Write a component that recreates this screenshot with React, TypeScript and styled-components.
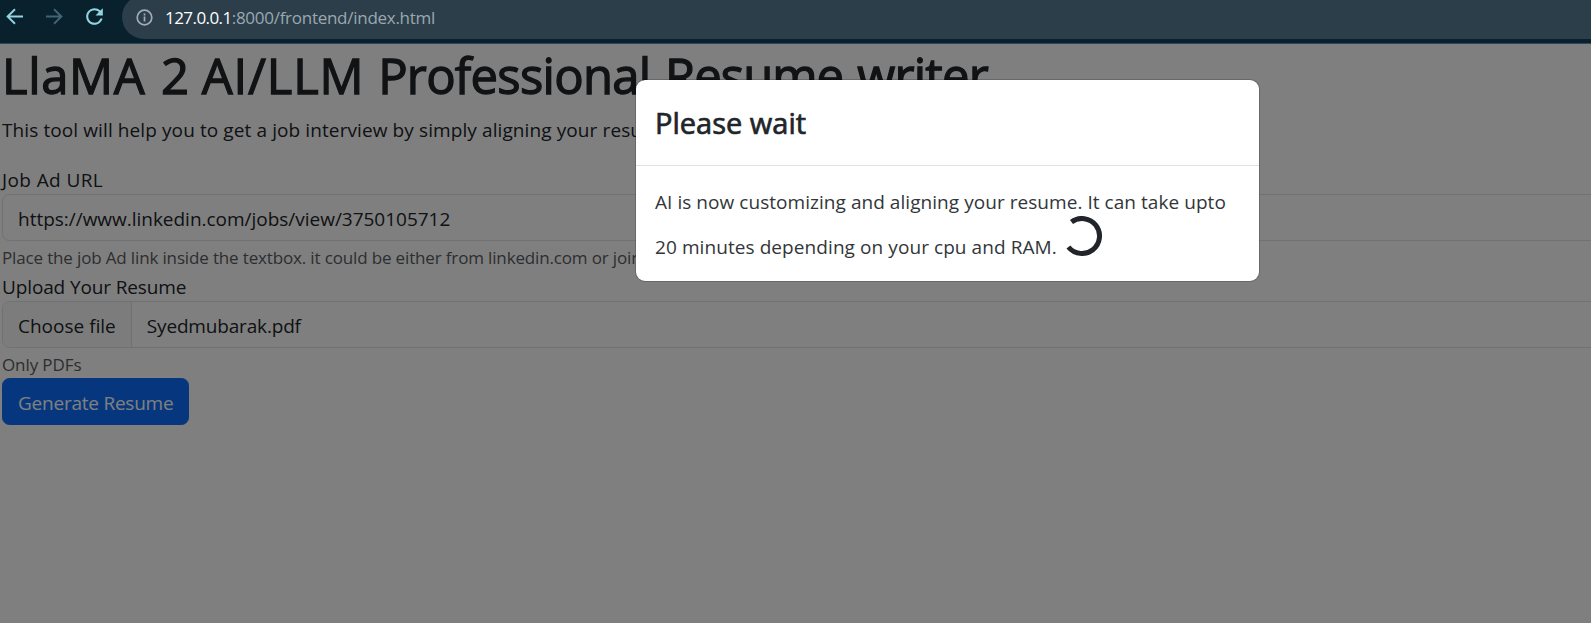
import React from "react";
import styled, { createGlobalStyle } from "styled-components";

const GlobalStyle = createGlobalStyle`
  * { box-sizing: border-box; }
  html, body { margin: 0; overflow: hidden; }
  body {
    font-family: "Open Sans", "Noto Sans", sans-serif;
    color: #212529;
    background: #808080;
  }
`;

const Window = styled.div`
  width: 100%;
  height: 100vh;
  display: flex;
  flex-direction: column;
  overflow: hidden;
`;

const Toolbar = styled.header`
  flex: none;
  height: 44px;
  display: flex;
  align-items: flex-start;
  overflow: hidden;
  background: #08212d;
  border-bottom: 1px solid #29495a;
`;

const NavButtons = styled.nav`
  flex: none;
  width: 122px;
  padding: 4px 0 0 2px;
  display: flex;
  gap: 15px;
`;

const NavIcon = styled.svg<{ $dim?: boolean }>`
  width: 25px;
  height: 25px;
  color: ${(p) => (p.$dim ? "#416576" : "#94d4e2")};
`;

const AddressBar = styled.div`
  flex: 1;
  height: 44px;
  margin-top: -5px;
  padding: 1px 0 0 14px;
  display: flex;
  align-items: center;
  border-radius: 22px 0 0 22px;
  background: #2b3e4a;
  color: #9ba8b0;
`;

const InfoIcon = styled.svg`
  width: 17px;
  height: 17px;
  margin-right: 12px;
  color: #a3acb2;
`;

const UrlPart = styled.span<{ $host?: boolean }>`
  font-size: 17px;
  line-height: 24px;
  white-space: nowrap;
  letter-spacing: ${(p) => (p.$host ? "-0.56px" : "-0.27px")};
  color: ${(p) => (p.$host ? "#ffffff" : "inherit")};
`;

const Viewport = styled.div`
  position: relative;
  flex: 1;
  overflow: hidden;
  background: #ffffff;
`;

const Page = styled.main`
  width: 1893px;
  padding-left: 2px;
`;

const Heading = styled.h1`
  margin: 0 0 10px;
  height: 60px;
  font-size: 49px;
  font-weight: 400;
  line-height: 62px;
  -webkit-text-stroke: 1.3px currentColor;
  white-space: nowrap;
`;

const Word = styled.span<{ $track: number; $gap?: number }>`
  letter-spacing: ${(p) => p.$track}px;
  margin-right: ${(p) => p.$gap ?? 0}px;
`;

const Text = styled.div<{ $track?: number }>`
  height: 30px;
  font-size: 19px;
  line-height: 32px;
  letter-spacing: ${(p) => p.$track ?? 0}px;
  white-space: nowrap;
`;

const Intro = styled(Text)`
  margin-bottom: 20px;
`;

const Hint = styled.div<{ $track?: number }>`
  margin-top: 3px;
  height: 27px;
  font-size: 17px;
  line-height: 27px;
  letter-spacing: ${(p) => p.$track ?? 0}px;
  white-space: nowrap;
  color: #595c5f;
`;

const Field = styled.div`
  height: 47px;
  display: flex;
  overflow: hidden;
  border: 1px solid #dee2e6;
  border-radius: 7.5px;
  background: #ffffff;
`;

const FieldPart = styled.div<{ $button?: boolean }>`
  padding: 7.5px 15px;
  background: ${(p) => (p.$button ? "#f8f9fa" : "transparent")};
  border-right: ${(p) => (p.$button ? "1px solid #dee2e6" : "0")};
`;

const PrimaryButton = styled.button`
  display: block;
  width: 187px;
  height: 47px;
  padding: 7.5px 15px;
  border: 1px solid #0d6efd;
  border-radius: 7.5px;
  background: #0d6efd;
  color: #ffffff;
  font-family: inherit;
  text-align: left;
`;

const Backdrop = styled.div`
  position: absolute;
  top: 0;
  left: 0;
  width: 1895px;
  height: 100%;
  padding-top: 35px;
  background: rgba(0, 0, 0, 0.5);
`;

const Dialog = styled.section`
  width: 625px;
  height: 203px;
  margin: 0 auto;
  border: 1px solid rgba(0, 0, 0, 0.175);
  border-radius: 10px;
  background: #ffffff;
  background-clip: padding-box;
`;

const DialogHeader = styled.header`
  height: 86px;
  padding: 20px 19px;
  border-bottom: 1px solid #dee2e6;
`;

const DialogTitle = styled.h2`
  margin: 0;
  font-size: 29px;
  font-weight: 400;
  line-height: 45px;
  -webkit-text-stroke: 0.7px currentColor;
`;

const DialogBody = styled.div`
  padding: 20px 19px;
  color: #32363a;
`;

const LastLine = styled.div`
  display: flex;
  align-items: flex-start;
  gap: 5px;
`;

const Lowered = styled(Text)`
  margin-top: 14.5px;
`;

const Spinner = styled.svg`
  width: 40px;
  height: 40px;
  color: #212529;
`;

export default function App() {
  return (
    <Window>
      <GlobalStyle />
      <Toolbar>
        <NavButtons>
          <NavIcon viewBox="0 0 25 25" fill="none" stroke="currentColor" strokeWidth="1.9">
            <path d="M21 12.5H5.6M13 5.2L5.6 12.5l7.4 7.3" />
          </NavIcon>
          <NavIcon $dim viewBox="0 0 25 25" fill="none" stroke="currentColor" strokeWidth="1.9">
            <path d="M4 12.5h15.4M12 5.2l7.4 7.3-7.4 7.3" />
          </NavIcon>
          <NavIcon viewBox="0 0 24 24" fill="currentColor">
            <path d="M17.65 6.35A7.96 7.96 0 0 0 12 4c-4.42 0-7.99 3.58-7.99 8s3.57 8 7.99 8c3.73 0 6.84-2.55 7.73-6h-2.08A5.99 5.99 0 0 1 12 18c-3.31 0-6-2.69-6-6s2.69-6 6-6c1.66 0 3.14.69 4.22 1.78L13 11h7V4z" />
          </NavIcon>
        </NavButtons>
        <AddressBar>
          <InfoIcon viewBox="0 0 17 17" fill="none" stroke="currentColor" strokeWidth="1.7">
            <circle cx="8.5" cy="8.5" r="7.3" />
            <path d="M8.5 7.6v4.8M8.5 4.6v1.8" />
          </InfoIcon>
          <UrlPart $host>127.0.0.1</UrlPart>
          <UrlPart>:8000/frontend/index.html</UrlPart>
        </AddressBar>
      </Toolbar>
      <Viewport>
        <Page>
          <Heading>
            <Word $track={0.6} $gap={3}>LlaMA</Word> <Word $track={0}>2</Word>{" "}
            <Word $track={0.8} $gap={1}>AI/LLM</Word>{" "}
            <Word $track={-0.75} $gap={2}>Professional</Word>{" "}
            <Word $track={-1} $gap={1.5}>Resume</Word> <Word $track={-0.8}>writer</Word>
          </Heading>
          <Intro $track={0.1}>
            This tool will help you to get a job interview by simply aligning your resu
          </Intro>
          <Text $track={0.4}>Job Ad URL</Text>
          <Field>
            <FieldPart>
              <Text $track={-0.02}>https://www.linkedin.com/jobs/view/3750105712</Text>
            </FieldPart>
          </Field>
          <Hint $track={-0.15}>
            Place the job Ad link inside the textbox. it could be either from linkedin.com or join
          </Hint>
          <Text $track={-0.13}>Upload Your Resume</Text>
          <Field>
            <FieldPart $button>
              <Text>Choose file</Text>
            </FieldPart>
            <FieldPart>
              <Text $track={-0.17}>Syedmubarak.pdf</Text>
            </FieldPart>
          </Field>
          <Hint $track={-0.1}>Only PDFs</Hint>
          <PrimaryButton>
            <Text as="span" $track={-0.23}>Generate Resume</Text>
          </PrimaryButton>
        </Page>
        <Backdrop>
          <Dialog role="dialog">
            <DialogHeader>
              <DialogTitle>Please wait</DialogTitle>
            </DialogHeader>
            <DialogBody>
              <Text $track={0.05}>
                AI is now customizing and aligning your resume. It can take upto
              </Text>
              <LastLine>
                <Lowered $track={0.08}>20 minutes depending on your cpu and RAM.</Lowered>
                <Spinner viewBox="0 0 40 40" fill="none" stroke="currentColor" strokeWidth="5">
                  <path d="M9.5 6A17.5 17.5 0 1 1 6.4 31" />
                </Spinner>
              </LastLine>
            </DialogBody>
          </Dialog>
        </Backdrop>
      </Viewport>
    </Window>
  );
}
